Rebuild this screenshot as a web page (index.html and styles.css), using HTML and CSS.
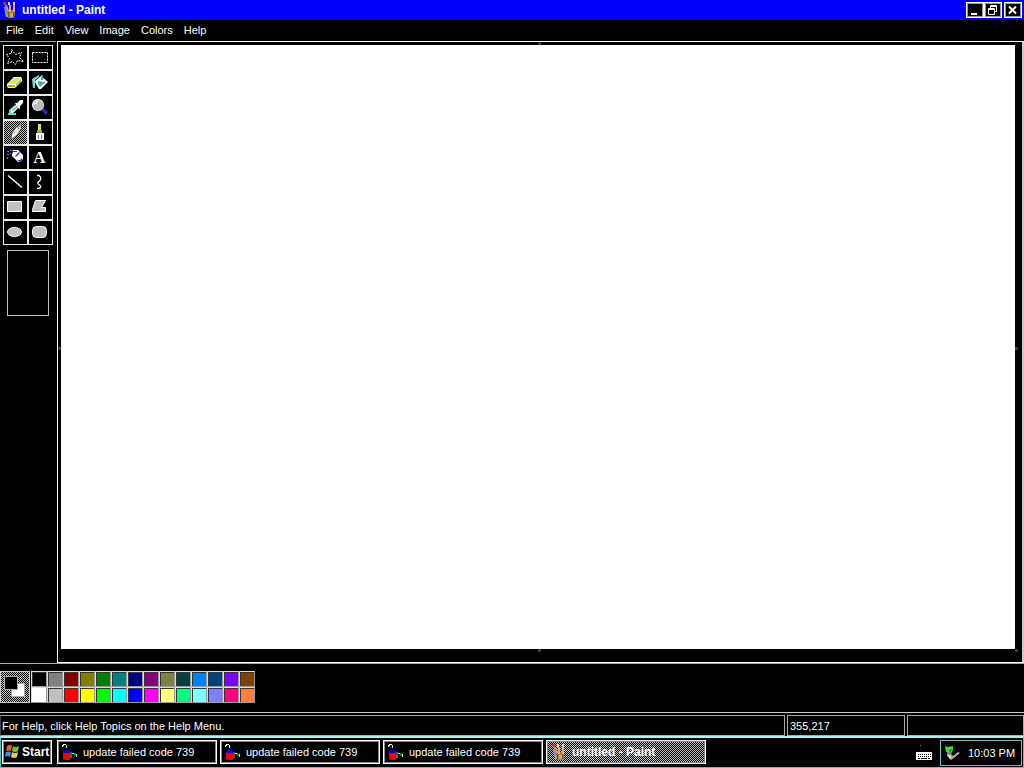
FILE: index.html
```html
<!DOCTYPE html>
<html lang="en">
<head>
<meta charset="utf-8">
<title>untitled - Paint</title>
<link rel="stylesheet" href="styles.css">
</head>
<body>
<svg class="defs" aria-hidden="true">
  <symbol id="paint" viewBox="0 0 16 16">
    <path fill="#a87848" d="M4 8h9v4l-1 4H6l-2-4z"/><path fill="#705030" d="M6 10h1v5H6zM11 9h1v6h-1z"/>
    <path fill="#d83030" d="M1 0h3v3H2z"/><path fill="#e09050" d="M3 3h2l2 6H5z"/>
    <path fill="#8090ff" d="M2 5h2l1 4-1 2H3z"/><path fill="#60d060" d="M3 11h2l1 4H4z"/>
    <path fill="#e0b070" d="M7 3h2v7H7zM11 2h2v8h-2z"/><path fill="#e0d8c0" d="M6 0h2v3H6zM11 0h2v3h-2z"/><path fill="#e8a060" d="M8 11h3v4H8z"/>
  </symbol>
  <symbol id="failed" viewBox="0 0 16 16">
    <path fill="#ffffa0" d="M1 0h3v1H2v1H1zM4 1h1v3H4zM0 1h1v2H0z"/><path fill="#0000e0" d="M3 6h5l1 3v2H1V8z"/><path fill="#f00000" d="M1 9h7v7H3l-2-1z"/>
    <path fill="#008030" d="M8 8h2v3H8zM11 9h3v3h-2z"/><path fill="#c03030" d="M8 11h2v3H8z"/><path fill="#c0ff90" d="M10 9h2v1h-2zM14 10h1v3h-1z"/>
  </symbol>
</svg>
<div class="screen">
  <header class="titlebar">
    <svg class="icon16"><use href="#paint"/></svg>
    <h1>untitled - Paint</h1>
    <div class="winbuttons">
      <button aria-label="Minimize"><svg viewBox="0 0 14 13"><path d="M3 9h6v2H3z" fill="#fff"/></svg></button>
      <button aria-label="Restore"><svg viewBox="0 0 14 13"><path d="M4.500 4V1.500h6v6H8M4 2.500h7M2.500 4.500h6v6h-6zM2 5.500h7" fill="none" stroke="#fff"/></svg></button>
      <button class="close" aria-label="Close"><svg viewBox="0 0 14 13"><path d="M3 2.500l7 7M10 2.500l-7 7" fill="none" stroke="#fff" stroke-width="2"/></svg></button>
    </div>
  </header>
  <nav class="menubar">
    <button>File</button><button>Edit</button><button>View</button><button>Image</button><button>Colors</button><button>Help</button>
  </nav>
  <main class="workspace">
    <aside class="toolbox">
      <div class="tools">
        <button aria-label="Free-form select"><svg viewBox="0 0 23 23"><path d="M7.500 3.500l4 5 6-2-2 5 4 4-6-1-2 4-3-3-5 2 2-5-3-4 5-1z" fill="none" stroke="#fff" stroke-dasharray="2 1"/></svg></button>
        <button aria-label="Select"><svg viewBox="0 0 23 23"><path d="M3.500 6.500h15v10h-15z" fill="none" stroke="#fff" stroke-dasharray="2 1"/></svg></button>
        <button aria-label="Eraser"><svg viewBox="0 0 23 23"><path d="M3 13l7-7h7l1 2v2l-7 7H4l-1-2z" fill="#fff"/><path d="M4 13l7-6h6l-6 6z" fill="#d8e070"/><path d="M4 14h7v2H4zM12 13l5-5v2l-5 5z" fill="#a8b030"/></svg></button>
        <button aria-label="Fill"><svg viewBox="0 0 23 23"><path d="M3 8l7-4v2L6 9v8H4z" fill="#80d8d8"/><path d="M6 10l6-5 7 6-7 7h-2l-3-5z" fill="#fff"/><path d="M9 10l8 1-6 5-2-3zM12 4h2v5h-2z" fill="#40b0b0"/></svg></button>
        <button aria-label="Pick color"><svg viewBox="0 0 23 23"><path d="M4 17h8v2H4zM5 14l6-5 2 3-6 6H5z" fill="#58d8d0"/><path d="M7 14l5-5-1-2h2l3-3h3v3l-3 3v3l-2-1-5 5H7z" fill="#fff"/><path d="M8 14l5-4 1 1-5 4z" fill="#70a8a8"/></svg></button>
        <button aria-label="Magnifier"><svg viewBox="0 0 23 23"><path d="M12 14l2-2 5 4-2 3z" fill="#2828c8"/><circle cx="9" cy="9" r="6" fill="#fff"/><circle cx="9.500" cy="9.500" r="5.300" fill="#b8b8b8"/><path d="M5 7h2V5h2v1H8v2H6v1H5z" fill="#fff"/></svg></button>
        <button class="on" aria-label="Pencil"><svg viewBox="0 0 23 23"><path d="M7 18l1-6 5-7 4-2v5l-4 6-5 4z" fill="#fff" stroke="#303030" stroke-width=".7"/><path d="M11 8l3 1-3 5-2-1z" fill="#e8e8b0"/><path d="M14 4l2 2M13 5l2 3" stroke="#404020" fill="none"/></svg></button>
        <button aria-label="Brush"><svg viewBox="0 0 23 23"><path d="M9 3h3v8H9z" fill="#e0e060"/><path d="M8 9h5v3H8z" fill="#a0a030"/><path d="M7 12h8v7H7z" fill="#fff"/><path d="M9 14h1v4H9zM12 14h1v4h-1z" fill="#666"/></svg></button>
        <button aria-label="Airbrush"><svg viewBox="0 0 23 23"><path d="M3 5h2v1H3zM6 4h2v1H6zM3 8h2v1H3zM6 7h1v1H6zM3 11h1v2H3z" fill="#7070ff"/><path d="M9 4h5l5 5v4l-3 3h-2l-6-6z" fill="#fff"/><path d="M9 5h4v1H9zM11 10l4-4 1 1-4 4zM13 14h3l2-2v2l-2 2z" fill="#3030b0"/></svg></button>
        <button class="letter" aria-label="Text">A</button>
        <button aria-label="Line"><svg viewBox="0 0 23 23"><path d="M4 4.500l14 12" fill="none" stroke="#fff" stroke-width="1.500"/></svg></button>
        <button aria-label="Curve"><svg viewBox="0 0 23 23"><path d="M8 4.500h2q3 2 1 5q-4 3-1 4q4 3-1 4H8" fill="none" stroke="#fff" stroke-width="1.300"/></svg></button>
        <button aria-label="Rectangle"><svg viewBox="0 0 23 23"><path d="M3.500 5.500h14v10h-14z" fill="#c0c0c0" stroke="#fff"/></svg></button>
        <button aria-label="Polygon"><svg viewBox="0 0 23 23"><path d="M6.500 4.500h10l-4 7h4v4h-13v-2z" fill="#c0c0c0" stroke="#fff"/></svg></button>
        <button aria-label="Ellipse"><svg viewBox="0 0 23 23"><ellipse cx="10.500" cy="11" rx="7" ry="4.500" fill="#c0c0c0" stroke="#fff"/></svg></button>
        <button aria-label="Rounded rectangle"><svg viewBox="0 0 23 23"><rect x="3.500" y="5.500" width="14" height="11" rx="4" fill="#c0c0c0" stroke="#fff"/></svg></button>
      </div>
      <div class="options"></div>
    </aside>
    <section class="viewport">
      <div class="canvas"><i class="grip n"></i><i class="grip w"></i><i class="grip e"></i><i class="grip s"></i><i class="grip se"></i></div>
    </section>
  </main>
  <section class="colorbox">
    <div class="current"><i class="back"></i><i class="fore"></i></div>
    <div class="palette">
      <button class="c1" aria-label="Black"></button><button class="c2" aria-label="Gray"></button><button class="c3" aria-label="Maroon"></button><button class="c4" aria-label="Olive"></button><button class="c5" aria-label="Green"></button><button class="c6" aria-label="Teal"></button><button class="c7" aria-label="Navy"></button><button class="c8" aria-label="Purple"></button><button class="c9" aria-label="Khaki"></button><button class="c10" aria-label="Dark teal"></button><button class="c11" aria-label="Azure"></button><button class="c12" aria-label="Dark blue"></button><button class="c13" aria-label="Violet"></button><button class="c14" aria-label="Brown"></button>
      <button class="d1" aria-label="White"></button><button class="d2" aria-label="Silver"></button><button class="d3" aria-label="Red"></button><button class="d4" aria-label="Yellow"></button><button class="d5" aria-label="Lime"></button><button class="d6" aria-label="Cyan"></button><button class="d7" aria-label="Blue"></button><button class="d8" aria-label="Magenta"></button><button class="d9" aria-label="Light yellow"></button><button class="d10" aria-label="Spring green"></button><button class="d11" aria-label="Light cyan"></button><button class="d12" aria-label="Lavender"></button><button class="d13" aria-label="Rose"></button><button class="d14" aria-label="Coral"></button>
    </div>
  </section>
  <footer class="status">
    <span class="help">For Help, click Help Topics on the Help Menu.</span><span class="pos">355,217</span><span class="size"></span>
  </footer>
  <nav class="taskbar">
    <button class="start"><svg class="icon16" viewBox="0 0 16 16"><path d="M3 2q3-2 5 0l-1 5q-3-1-5 0z" fill="#e86030"/><path d="M9 2q3 2 6 0l-1 5q-3 2-6 0z" fill="#70c040"/><path d="M2 8q2-1 5 0l-1 5q-3-2-5 0z" fill="#5088f0"/><path d="M8 8q3 2 6 0l-1 5q-3 2-6 0z" fill="#f0d040"/></svg>Start</button>
    <button class="task"><svg class="icon16"><use href="#failed"/></svg>update failed code 739</button>
    <button class="task"><svg class="icon16"><use href="#failed"/></svg>update failed code 739</button>
    <button class="task"><svg class="icon16"><use href="#failed"/></svg>update failed code 739</button>
    <button class="task active"><svg class="icon16"><use href="#paint"/></svg>untitled - Paint</button>
    <svg class="keyboard" viewBox="0 0 16 16"><path d="M0 7h16v8H0z" fill="#fff"/><path d="M2 9.500h13M2 11.500h13" stroke="#000" stroke-dasharray="1 1"/><path d="M2 13.500h2M5 13.500h6M12 13.500h2" stroke="#000"/><path d="M4 0h1v1H4z" fill="#888"/></svg>
    <div class="tray"><svg class="icon16" viewBox="0 0 16 16"><path d="M3 8l4 1 2 2 5-4 2 1-6 5-3 2-4-4z" fill="#a8a8a8"/><path d="M1 1l3 1 5-1v4l-2 4-5-2z" fill="#50d040"/><path d="M4 10l3 2-1 2z" fill="#fff"/><path d="M5 5l3-1-2 4z" fill="#208020"/></svg><time>10:03 PM</time></div>
  </nav>
</div>
</body>
</html>
```
FILE: styles.css
```css
* { box-sizing: border-box; }
body { margin: 0; background: #000; color: #fff; font: 11px/13px "Liberation Sans", Arial, sans-serif; }
button { margin: 0; padding: 0; border: 0; background: #000; color: #fff; font: inherit; }
svg { display: block; }
.defs { display: none; }
.screen { display: flex; flex-direction: column; min-height: 100vh; }
.icon16 { width: 16px; height: 16px; flex: none; }

.titlebar { display: flex; align-items: center; height: 20px; padding: 0 2px; background: #00f; }
.titlebar h1 { flex: 1; margin: 0 0 0 4px; font-size: 12px; font-weight: bold; }
.winbuttons { display: flex; }
.winbuttons button { width: 18px; height: 16px; border: 1px solid #fff; outline: 1px solid #999; outline-offset: -2px; }
.winbuttons svg { width: 14px; height: 13px; margin-left: 1px; }
.winbuttons .close { margin-left: 2px; }

.menubar { display: flex; gap: 11px; height: 21px; padding: 0 6px; }

.workspace { flex: 1; display: flex; gap: 1px; }
.toolbox { width: 56px; padding: 3px 0 0 3px; border-top: 1px solid #aaa; }
.tools { display: grid; grid-template-columns: 25px 25px; grid-auto-rows: 25px; }
.tools button { border: 1px solid #e8e8e8; }
.tools svg { width: 23px; height: 23px; }
.on, .current, .taskbar .active { background: repeating-conic-gradient(#000 0 25%, #c0c0c0 0 50%) 0 0 / 2px 2px; }
.tools .letter { padding-right: 2px; font: bold 17px/20px "Liberation Serif", serif; }
.options { width: 42px; height: 66px; margin: 5px 0 0 4px; border: 1px solid #c0c0c0; }

.viewport { flex: 1; display: flex; padding: 3px 7px 13px 3px; border: 1px solid #fff; border-right: 2px solid #ccc; }
.canvas { flex: 1; position: relative; background: #fff; }
.grip { position: absolute; width: 3px; height: 3px; background: #185020; }
.n { top: -3px; left: 50%; }
.w { left: -3px; top: 50%; }
.e { right: -3px; top: 50%; }
.s { bottom: -3px; left: 50%; }
.se { bottom: -3px; right: -3px; }

.colorbox { display: flex; height: 50px; padding-top: 7px; border-top: 1px solid #aaa; border-bottom: 1px solid #ccc; }
.current { position: relative; width: 30px; height: 32px; margin-right: 1px; border: 1px solid #ccc; }
.current i { position: absolute; width: 14px; height: 14px; border: 1px solid #aaa; }
.fore { left: 3px; top: 4px; background: #000; }
.back { left: 10px; top: 11px; background: #fff; }
.palette { display: grid; grid-template-columns: repeat(14, 16px); grid-auto-rows: 16px; }
.palette button { border: 1px solid #ddd; border-right-color: #999; border-bottom-color: #999; box-shadow: inset 1px 1px #333; }
.palette .d1 { box-shadow: none; }
.c1 { background: #000; } .c2 { background: #808080; } .c3 { background: #800000; } .c4 { background: #808000; }
.c5 { background: #008000; } .c6 { background: #008080; } .c7 { background: #000080; } .c8 { background: #800080; }
.c9 { background: #808040; } .c10 { background: #004040; } .c11 { background: #0080ff; } .c12 { background: #004080; }
.c13 { background: #8000ff; } .c14 { background: #804000; }
.d1 { background: #fff; } .d2 { background: #c0c0c0; } .d3 { background: #f00; } .d4 { background: #ff0; }
.d5 { background: #0f0; } .d6 { background: #0ff; } .d7 { background: #00f; } .d8 { background: #f0f; }
.d9 { background: #ffff80; } .d10 { background: #00ff80; } .d11 { background: #80ffff; } .d12 { background: #8080ff; }
.d13 { background: #ff0080; } .d14 { background: #ff8040; }

.status { display: flex; gap: 2px; height: 23px; padding-top: 2px; }
.status span { height: 21px; padding: 4px 2px; border: 1px solid #aaa; }
.status .help { flex: 1; padding-left: 1px; border-left-color: #444; }
.status .pos { width: 118px; }
.status .size { width: 117px; }

.taskbar { display: flex; gap: 3px; height: 32px; padding: 2px 1px 0; border: 1px solid #50c8c0; border-top: 2px solid #b0f0e8; }
.taskbar button { display: flex; align-items: center; height: 24px; border: 1px solid #fff; outline: 1px solid #888; outline-offset: -2px; }
.taskbar .start { width: 50px; margin-right: 2px; padding-left: 1px; gap: 2px; font-size: 12px; font-weight: bold; }
.taskbar .task { flex: 0 1 160px; padding-left: 4px; gap: 5px; white-space: nowrap; }
.taskbar .active { font-size: 12px; font-weight: bold; }
.keyboard { width: 16px; height: 16px; margin: 5px 5px 0 auto; }
.tray { display: flex; align-items: center; gap: 8px; width: 82px; height: 26px; padding-left: 3px; border: 1px solid #60c0b8; white-space: nowrap; }
```
